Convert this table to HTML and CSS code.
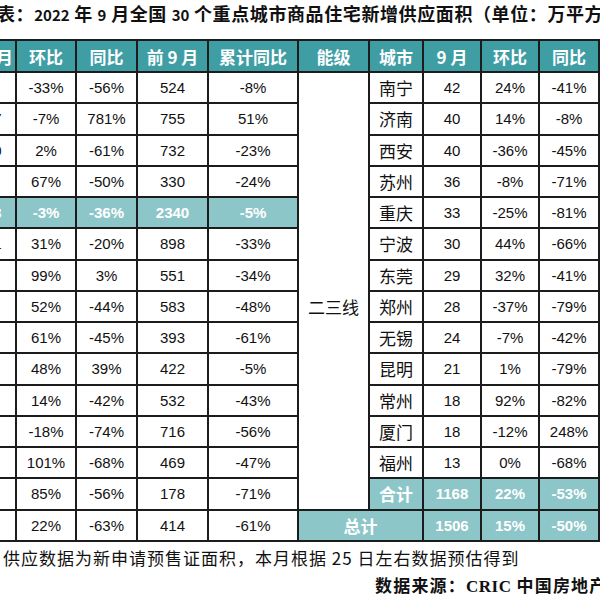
FILE: index.html
```html
<!DOCTYPE html>
<html lang="zh-CN">
<head>
<meta charset="utf-8">
<title>2022年9月全国30个重点城市商品住宅新增供应面积</title>
<link rel="stylesheet" href="styles.css">
</head>
<body>
<div class="page">
  <div class="title">表：<span class="d">2022</span> 年 <span class="d">9</span> 月全国 <span class="d">30</span> 个重点城市商品住宅新增供应面积（单位：万平方米）</div>
  <table class="grid">
    <colgroup>
      <col class="c-a"><col class="c-b"><col class="c-c"><col class="c-d"><col class="c-e">
      <col class="c-f"><col class="c-g"><col class="c-h"><col class="c-i"><col class="c-j"><col class="c-k">
    </colgroup>
    <thead>
      <tr>
        <th class="first">9 月</th><th>环比</th><th>同比</th><th>前 9 月</th><th>累计同比</th>
        <th>能级</th><th>城市</th><th>9 月</th><th>环比</th><th>同比</th><th>前 9 月</th>
      </tr>
    </thead>
    <tbody>
      <tr><td>58</td><td>-33%</td><td>-56%</td><td>524</td><td>-8%</td>
        <td class="level" rowspan="14">二三线</td><td class="city">南宁</td><td>42</td><td>24%</td><td>-41%</td><td></td></tr>
      <tr><td>127</td><td>-7%</td><td>781%</td><td>755</td><td>51%</td>
        <td class="city">济南</td><td>40</td><td>14%</td><td>-8%</td><td></td></tr>
      <tr><td>100</td><td>2%</td><td>-61%</td><td>732</td><td>-23%</td>
        <td class="city">西安</td><td>40</td><td>-36%</td><td>-45%</td><td></td></tr>
      <tr><td>48</td><td>67%</td><td>-50%</td><td>330</td><td>-24%</td>
        <td class="city">苏州</td><td>36</td><td>-8%</td><td>-71%</td><td></td></tr>
      <tr><td class="hl">333</td><td class="hl">-3%</td><td class="hl">-36%</td><td class="hl">2340</td><td class="hl">-5%</td>
        <td class="city">重庆</td><td>33</td><td>-25%</td><td>-81%</td><td></td></tr>
      <tr><td>101</td><td>31%</td><td>-20%</td><td>898</td><td>-33%</td>
        <td class="city">宁波</td><td>30</td><td>44%</td><td>-66%</td><td></td></tr>
      <tr><td>111</td><td>99%</td><td>3%</td><td>551</td><td>-34%</td>
        <td class="city">东莞</td><td>29</td><td>32%</td><td>-41%</td><td></td></tr>
      <tr><td>47</td><td>52%</td><td>-44%</td><td>583</td><td>-48%</td>
        <td class="city">郑州</td><td>28</td><td>-37%</td><td>-79%</td><td></td></tr>
      <tr><td>31</td><td>61%</td><td>-45%</td><td>393</td><td>-61%</td>
        <td class="city">无锡</td><td>24</td><td>-7%</td><td>-42%</td><td></td></tr>
      <tr><td>45</td><td>48%</td><td>39%</td><td>422</td><td>-5%</td>
        <td class="city">昆明</td><td>21</td><td>1%</td><td>-79%</td><td></td></tr>
      <tr><td>37</td><td>14%</td><td>-42%</td><td>532</td><td>-43%</td>
        <td class="city">常州</td><td>18</td><td>92%</td><td>-82%</td><td></td></tr>
      <tr><td>29</td><td>-18%</td><td>-74%</td><td>716</td><td>-56%</td>
        <td class="city">厦门</td><td>18</td><td>-12%</td><td>248%</td><td></td></tr>
      <tr><td>39</td><td>101%</td><td>-68%</td><td>469</td><td>-47%</td>
        <td class="city">福州</td><td>13</td><td>0%</td><td>-68%</td><td></td></tr>
      <tr><td>19</td><td>85%</td><td>-56%</td><td>178</td><td>-71%</td>
        <td class="city hl">合计</td><td class="hl">1168</td><td class="hl">22%</td><td class="hl">-53%</td><td class="hl"></td></tr>
      <tr><td>33</td><td>22%</td><td>-63%</td><td>414</td><td>-61%</td>
        <td class="city hl" colspan="2">总计</td><td class="hl">1506</td><td class="hl">15%</td><td class="hl">-50%</td><td class="hl"></td></tr>
    </tbody>
  </table>
  <div class="note">注：供应数据为新申请预售证面积，本月根据 25 日左右数据预估得到</div>
  <div class="source">数据来源：<span class="latin">CRIC</span> 中国房地产决策咨询系统</div>
</div>
</body>
</html>
```
FILE: styles.css
```css
html, body {
  margin: 0;
  padding: 0;
  background: #ffffff;
}

.page {
  width: 600px;
  height: 600px;
  overflow: hidden;
  font-family: "Noto Sans CJK SC", sans-serif;
  color: #111111;
}

.title {
  margin-left: -3px;
  height: 26px;
  line-height: 26px;
  white-space: nowrap;
  font-weight: bold;
  font-size: 18px;
  letter-spacing: 0.6px;
}

.title .d {
  font-size: 15px;
  letter-spacing: 0;
}

.grid {
  margin-top: 13px;
  margin-left: -31px;
  width: 691px;
  border-collapse: collapse;
  table-layout: fixed;
}

.c-a { width: 46px; }
.c-b { width: 60px; }
.c-c { width: 61px; }
.c-d { width: 71px; }
.c-e { width: 90px; }
.c-f { width: 71px; }
.c-g { width: 54px; }
.c-h { width: 58px; }
.c-i { width: 58px; }
.c-j { width: 60px; }
.c-k { width: 62px; }

.grid th,
.grid td {
  border: 2px solid #1c1c1c;
  padding: 0;
  text-align: center;
  white-space: nowrap;
  overflow: hidden;
}

.grid th {
  height: 30px;
  background: #3e9ea4;
  color: #ffffff;
  font-weight: bold;
  font-size: 17px;
}

.grid th.first {
  text-align: right;
  padding-right: 2px;
}

.grid td {
  height: 29.25px;
  font-family: "Liberation Sans", "Noto Sans CJK SC", sans-serif;
  font-size: 15px;
  color: #111111;
}

.grid tbody td:first-child {
  padding-right: 8px;
}

.grid td.city,
.grid td.level {
  font-family: "Noto Sans CJK SC", sans-serif;
  font-size: 17px;
}

.grid td.level {
  vertical-align: middle;
  padding-top: 31px;
}

.grid td.hl {
  background: #8dc6c8;
  color: #ffffff;
  font-weight: bold;
}

.note {
  margin-left: -33px;
  height: 32px;
  line-height: 32px;
  white-space: nowrap;
  font-size: 17px;
  letter-spacing: 1px;
}

.source {
  margin-left: 375px;
  height: 22px;
  line-height: 22px;
  white-space: nowrap;
  font-weight: bold;
  font-size: 17px;
  letter-spacing: 1.2px;
}

.source .latin {
  font-family: "Liberation Serif", serif;
  letter-spacing: 0.5px;
}
```
